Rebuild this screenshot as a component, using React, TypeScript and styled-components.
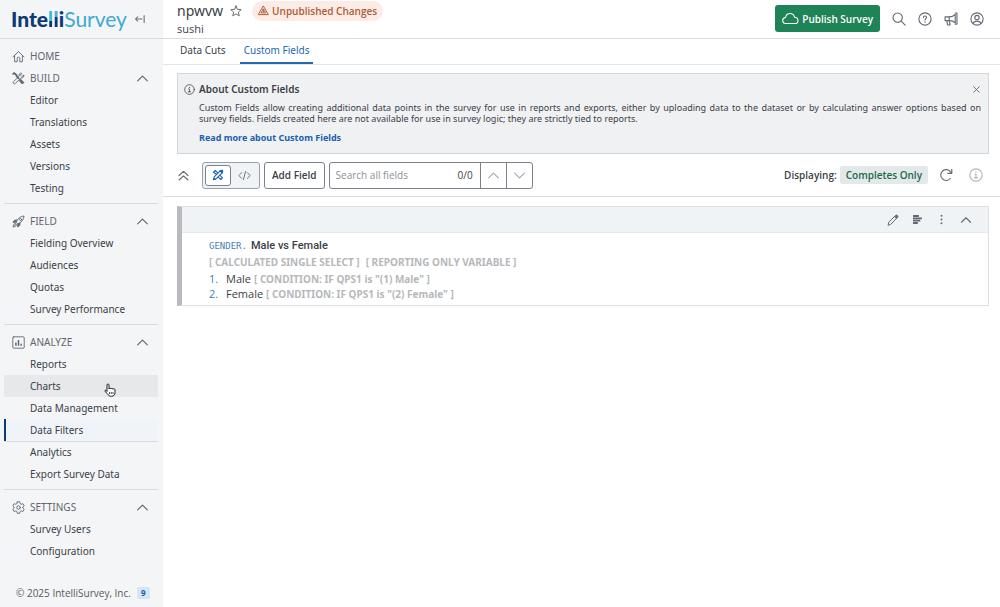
import React, { useState } from 'react';
import styled, { createGlobalStyle } from 'styled-components';

const GlobalStyle = createGlobalStyle`
  *, *::before, *::after { box-sizing: border-box; }
  body {
    margin: 0;
    background: #fff;
    color: #3a3f47;
    font-family: "Open Sans", "Noto Sans", sans-serif;
    font-size: 11px;
    line-height: 16px;
  }
  button, input { font: inherit; color: inherit; }
  a { color: inherit; text-decoration: none; }
  svg { display: block; flex: none; }
`;

/* ---------- icons ---------- */

const Svg = styled.svg.attrs({
  viewBox: '0 0 16 16',
  fill: 'none',
  stroke: 'currentColor',
  strokeLinecap: 'round',
  strokeLinejoin: 'round',
  'aria-hidden': true,
})<{ $size?: number; $weight?: number }>`
  width: ${(p) => p.$size ?? 14}px;
  height: ${(p) => p.$size ?? 14}px;
  stroke-width: ${(p) => p.$weight ?? 1.1};
`;

type IconProps = { size?: number; weight?: number };

const icon = (body: React.ReactNode) => ({ size, weight }: IconProps) => (
  <Svg $size={size} $weight={weight}>{body}</Svg>
);

const HomeIcon = icon(<><path d="M1.200 8.500 8 2l6.800 6.500" /><path d="M3.200 7V14.500h3.200V10.500a1.600 1.600 0 0 1 3.200 0v4h3.200V7" /></>);
const ToolsIcon = icon(
  <>
    <path d="M1.500 2.300 2.800 1.300 5.800 4.200 5.600 5.200 8 7.600" strokeWidth="2.200" />
    <path d="m9.500 9.300 1.200-.3 3.900 3.900-1.900 1.900L9 10.900Z" fill="currentColor" />
    <path d="M14.500 4.200 12.200 5.500 10.500 3.800 11.800 1.500C9.500 1 8.200 3 8.800 5.200L1.800 12a1.500 1.500 0 0 0 2.200 2.200l7-7c2.200.6 4-1 3.500-3Z" />
  </>,
);
const RocketIcon = icon(
  <>
    <path d="M5.300 8.500C7 4.500 10 1.500 14.800 1.200c-.2 4.800-3.200 7.800-7.300 9.500Z" />
    <circle cx="10.500" cy="5.500" r="1.300" />
    <path d="M6 6 3 6.500 1.200 9.200l3.900-.6M10 9.800 9.500 13 6.800 14.800l.6-3.900" fill="currentColor" />
    <path d="M4.300 10.500c-1.700 0-2.900 1.700-3 4.200 2.300 0 4.200-1 4.200-2.900Z" fill="currentColor" fillOpacity=".4" />
  </>,
);
const ChartIcon = icon(<><rect x="1" y="1" width="14" height="14" rx="1" /><path d="M4.800 8v4M8 5V12M11.200 9.500V12" strokeWidth="1.800" strokeLinecap="butt" /></>);
const GearIcon = icon(
  <>
    <path d="M6.500 1h3l.5 2.200 1.400.8 2.100-.7 1.500 2.600-1.600 1.500v1.400l1.600 1.500-1.500 2.600-2.100-.7-1.400.8-.5 2.200h-3l-.5-2.200-1.400-.8-2.100.7L1 10.300l1.600-1.500V7.400L1 5.900l1.500-2.600 2.100.7L6 3.200Z" />
    <circle cx="8" cy="8.100" r="2.200" />
  </>,
);
const UpIcon = icon(<path d="m2 11 6-6 6 6" />);
const DownIcon = icon(<path d="m2 5 6 6 6-6" />);
const CollapseIcon = icon(<path d="M10.500 8H2m3-3L2 8l3 3M13.500 3.500v9" />);
const StarIcon = icon(<path d="m8 1.200 1.900 4.500 5 .5-3.700 3.300 1.100 4.900L8 11.900l-4.300 2.500 1.100-4.900L1.100 6.200l5-.5Z" />);
const WarnIcon = icon(
  <>
    <path d="M8 1.800 15 14H1Z" />
    <path d="M8 6 11 11.500H5Z" />
    <path d="M8 8.300v1.500" />
  </>,
);
const SearchIcon = icon(<><circle cx="6.500" cy="6.500" r="5.300" /><path d="m10.500 10.500 4.500 4.500" /></>);
const HelpIcon = icon(
  <>
    <circle cx="8" cy="8" r="7" />
    <path d="M6.200 6.400c0-1.100.8-1.800 1.800-1.800s1.800.7 1.800 1.700c0 1.300-1.800 1.400-1.800 2.700" />
    <path d="M8 11.300v.2" strokeWidth="1.500" />
  </>,
);
const HornIcon = icon(
  <>
    <path d="M1.200 5.500h5.200c2.600 0 4.800-1.200 6.400-2.900v9.800C11.200 10.700 9 9.800 6.400 9.800H1.200Z" />
    <path d="M12.800 1.200h2v12.600h-2M6 5.500v4.300M3.200 9.800l.8 5h3L6 9.800" />
  </>,
);
const UserIcon = icon(<><circle cx="8" cy="8" r="7" /><circle cx="8" cy="6.300" r="2.500" /><path d="M3.800 13c.4-1.800 1.600-2.500 4.200-2.500s3.800.7 4.200 2.500" /></>);
const InfoIcon = icon(<><circle cx="8" cy="8" r="7" /><path d="M6.700 7.200H8v4M6.300 11.300h3.400" /><path d="M7.900 4.700v.2" strokeWidth="1.500" /></>);
const CloseIcon = icon(<path d="m3 3 10 10M13 3 3 13" />);
const DoubleUpIcon = icon(<path d="m2.500 8 5.500-5 5.500 5M2.500 13.500l5.500-5 5.500 5" />);
const DesignIcon = icon(
  <>
    <path d="M5.800 7 2 4.300 4.300 2 7.600 5.200M10.800 8.400l3.200 3.300-2.300 2.300-3.300-3.200" />
    <path d="m2 14 .9-3.400 8-8 2.500 2.500-8 8Z" />
    <path d="m11.200 2.500 2.600-.4-.3 2.600M2.200 13.800l1.800-.3" strokeWidth="2.400" />
  </>,
);
const CodeIcon = icon(<path d="M4.500 4.500 1 8l3.500 3.500M11.500 4.500 15 8l-3.500 3.500M9.300 3 6.700 13" />);
const RefreshIcon = icon(<><path d="M13 12a6.200 6.200 0 1 1 .2-7.600l.8 1.200" /><path d="M14.600 1.500v4.600H10" /></>);
const PencilIcon = icon(
  <>
    <path d="m1.500 14.500 1-3.800 7.700-7.500 2.600 2.600-7.500 7.700Z" />
    <path d="m10.300 3.100 1-1a1.800 1.800 0 0 1 2.700 2.700l-1 1Z" fill="currentColor" />
  </>,
);
const BarsIcon = icon(<path d="M1.500 2.900h8.500M1.500 6.300h13M1.500 9.700h10.500M1.500 13.100h7" strokeWidth="2.600" strokeLinecap="butt" />);
const DotsIcon = icon(<path d="M8 2.500v.1M8 8v.1M8 13.500v.1" strokeWidth="2.800" />);

/* ---------- page frame ---------- */

const Page = styled.div`
  display: grid;
  grid-template-columns: 163px minmax(0, 1fr);
  min-height: 100vh;
`;

const Sidebar = styled.aside`
  display: flex;
  flex-direction: column;
  background: #f4f5f7;
`;

const Brand = styled.div`
  display: flex;
  align-items: center;
  gap: 7px;
  height: 39px;
  padding: 0 0 1px 11px;
  border-bottom: 1px solid #d9dbde;
`;

const Logo = styled.a`
  font: 21px/30px Lato, sans-serif;
  color: #3fa9cf;
`;

const LogoStrong = styled.b`
  font-weight: 900;
  color: #0c3a73;
`;

const LogoSplit = styled.span<{ $stop: number }>`
  background: linear-gradient(#49b4d6 ${(p) => p.$stop}%, #0c3a73 ${(p) => p.$stop}%);
  background-clip: text;
  color: transparent;
`;

const IconButton = styled.button<{ $color?: string }>`
  display: inline-flex;
  align-items: center;
  justify-content: center;
  padding: 0;
  border: 0;
  background: none;
  color: ${(p) => p.$color ?? '#646a74'};
  cursor: pointer;
`;

const Nav = styled.nav`
  padding: 6px 5px 0 4px;
  font-family: "Noto Sans", sans-serif;
  font-size: 10px;
`;

const Section = styled.section`
  & + & {
    margin-top: 4px;
    padding-top: 6px;
    border-top: 1px solid #d9dbde;
  }
`;

const SectionHead = styled.button`
  display: flex;
  align-items: center;
  width: 100%;
  height: 22px;
  padding: 0 9px 0 8px;
  border: 0;
  background: none;
  color: #60656e;
  gap: 5px;
  text-align: left;
  cursor: pointer;
`;

const SectionLabel = styled.span`
  flex: 1;
`;

const List = styled.ul`
  margin: 0;
  padding: 0;
  list-style: none;
`;

const NavLink = styled.a<{ $state?: 'hover' | 'current' }>`
  display: flex;
  align-items: center;
  position: relative;
  height: 22px;
  padding-left: 26px;
  background: ${(p) => (p.$state === 'hover' ? '#e6e8ea' : p.$state === 'current' ? '#f0f4f9' : 'none')};
  box-shadow: ${(p) => (p.$state === 'current' ? 'inset 2px 0 #0c3a73, 0 1px #d9dbde' : 'none')};
`;

const Pointer = styled.svg`
  position: absolute;
  left: 100px;
  top: 8px;
  width: 12px;
  height: 14px;
`;

const Legal = styled.footer`
  display: flex;
  align-items: center;
  gap: 6px;
  margin-top: auto;
  padding: 0 0 6px 16px;
  font-size: 10px;
  color: #555a62;
`;

const Count = styled.span`
  padding: 0 4px;
  border-radius: 2px;
  background: #d3e6f6;
  color: #1a5ba6;
  font-size: 8px;
  font-weight: 700;
  line-height: 12px;
`;

/* ---------- header ---------- */

const Main = styled.main`
  min-width: 0;
`;

const Header = styled.header`
  display: flex;
  justify-content: space-between;
  align-items: center;
  height: 39px;
  padding: 0 16px 1px 14px;
  border-bottom: 1px solid #d9dbde;
`;

const TitleRow = styled.div`
  display: flex;
  align-items: center;
  gap: 7px;
  height: 20px;
`;

const Title = styled.h1`
  margin: 0;
  font: 14px/20px "Noto Sans", sans-serif;
`;

const Subtitle = styled.div`
  font-size: 11px;
  line-height: 16px;
`;

const Status = styled.span`
  display: inline-flex;
  align-items: center;
  gap: 3px;
  height: 20px;
  margin-left: 3px;
  padding: 0 6px;
  border-radius: 10px;
  background: #fcece5;
  color: #ae5a38;
  font-size: 10px;
  font-weight: 600;
`;

const Actions = styled.div`
  display: flex;
  align-items: center;
  gap: 12px;
`;

const Publish = styled.button`
  display: inline-flex;
  align-items: center;
  gap: 3px;
  height: 27px;
  padding: 0 7px;
  border: 0;
  border-radius: 3px;
  background: #1f8358;
  color: #fff;
  font-size: 10px;
  font-weight: 600;
  cursor: pointer;
`;

const Cloud = styled.svg`
  width: 17px;
  height: 13px;
`;

const Tabs = styled.nav`
  display: flex;
  gap: 10px;
  height: 26px;
  padding-left: 13px;
  border-bottom: 1px solid #e3e5e8;
`;

const Tab = styled.a<{ $active?: boolean }>`
  height: 25px;
  padding: 0 4px;
  font-family: "Noto Sans", sans-serif;
  font-size: 10px;
  line-height: 22px;
  color: ${(p) => (p.$active ? '#2468b2' : 'inherit')};
  border-bottom: 2px solid ${(p) => (p.$active ? '#2468b2' : 'transparent')};
`;

/* ---------- notice ---------- */

const Notice = styled.section`
  margin: 8px 11px 0 14px;
  padding: 7px 7px 7px 6px;
  border: 1px solid #d3d6d9;
  background: #f0f1f3;
`;

const NoticeHead = styled.div`
  display: flex;
  align-items: center;
  gap: 4px;
`;

const NoticeTitle = styled.h2`
  flex: 1;
  margin: 0;
  font: 600 10px/16px "Noto Sans", sans-serif;
`;

const NoticeBody = styled.div`
  padding: 5px 0 0 15px;
  font-family: "Noto Sans", sans-serif;
  font-size: 9px;
  line-height: 11px;
`;

const NoticeText = styled.p`
  margin: 0 0 6px;
  text-align: justify;
`;

const MoreLink = styled.a`
  color: #1c5fae;
  font-weight: 700;
  line-height: 16px;
`;

/* ---------- toolbar ---------- */

const Toolbar = styled.div`
  display: flex;
  align-items: center;
  gap: 4px;
  height: 43px;
  padding: 0 17px 0 14px;
  border-bottom: 1px solid #d9dbde;
`;

const Modes = styled.div`
  display: flex;
  height: 27px;
  margin-left: 8px;
  padding: 2px;
  border: 1px solid #9a9fa8;
  border-radius: 3px;
  background: #f0f3f6;
`;

const Mode = styled.button<{ $active?: boolean }>`
  display: inline-flex;
  align-items: center;
  justify-content: center;
  width: 26px;
  padding: 0;
  border: 1px solid ${(p) => (p.$active ? '#7b818c' : 'transparent')};
  border-radius: 3px;
  background: ${(p) => (p.$active ? '#fff' : 'none')};
  color: ${(p) => (p.$active ? '#1f64b3' : '#6b717b')};
  cursor: pointer;
`;

const AddButton = styled.button`
  height: 27px;
  padding: 0 7px;
  border: 1px solid #7b818c;
  border-radius: 3px;
  background: #fff;
  font-size: 10px;
  font-weight: 600;
  cursor: pointer;
`;

const Search = styled.label`
  display: flex;
  align-items: center;
  height: 27px;
  border: 1px solid #7b818c;
  border-radius: 3px;
  font-size: 10px;
`;

const SearchInput = styled.input`
  width: 128px;
  padding: 0 0 0 6px;
  border: 0;
  outline: 0;
  background: none;
  &::placeholder { color: #8b9098; opacity: 1; }
`;

const Hits = styled.span`
  padding-right: 7px;
`;

const Step = styled.button`
  display: inline-flex;
  align-items: center;
  justify-content: center;
  align-self: stretch;
  width: 26px;
  padding: 0;
  border: 0;
  border-left: 1px solid #7b818c;
  background: none;
  color: #a2a6ad;
  cursor: pointer;
`;

const Display = styled.div`
  display: flex;
  align-items: center;
  gap: 3px;
  margin-left: auto;
  font-size: 10px;
  font-weight: 600;
`;

const Filter = styled.span`
  padding: 0 6px;
  border-radius: 2px;
  background: #e5e8ea;
  color: #176b48;
  line-height: 18px;
`;

const ToolbarEnd = styled.div`
  display: flex;
  gap: 16px;
  margin-left: 7px;
`;

/* ---------- field card ---------- */

const Card = styled.article`
  margin: 9px 11px 0 14px;
  border: 1px solid #dfe1e4;
  border-left: 5px solid #b9babd;
`;

const CardTools = styled.div`
  display: flex;
  justify-content: flex-end;
  align-items: center;
  gap: 13px;
  height: 26px;
  padding-right: 16px;
  background: #eff3f6;
  border-bottom: 1px solid #e6e9ec;
`;

const CardBody = styled.div`
  padding: 5px 27px 4px;
`;

const FieldTitle = styled.h3`
  margin: 0;
  font: 500 11px/16px Roboto, sans-serif;
`;

const FieldName = styled.span`
  margin-right: 4px;
  color: #4a7fb5;
  font: 9px/16px "DejaVu Sans Mono", monospace;
`;

const Meta = styled.span`
  margin-right: 6px;
  color: #b6b8bb;
  font: 700 10px/16px "Noto Sans", sans-serif;
`;

const MetaRow = styled.div`
  line-height: 16px;
  height: 16px;
`;

const Options = styled.ol`
  margin: 1px 0 0;
  padding: 0;
  list-style: none;
  counter-reset: option;
`;

const Option = styled.li`
  display: flex;
  align-items: center;
  gap: 3px;
  height: 15px;
  counter-increment: option;
  &::before {
    content: counter(option) '.';
    width: 14px;
    color: #4a7fb5;
  }
`;

/* ---------- content ---------- */

const sections = [
  { name: 'BUILD', Icon: ToolsIcon, items: ['Editor', 'Translations', 'Assets', 'Versions', 'Testing'] },
  { name: 'FIELD', Icon: RocketIcon, items: ['Fielding Overview', 'Audiences', 'Quotas', 'Survey Performance'] },
  { name: 'ANALYZE', Icon: ChartIcon, items: ['Reports', 'Charts', 'Data Management', 'Data Filters', 'Analytics', 'Export Survey Data'] },
  { name: 'SETTINGS', Icon: GearIcon, items: ['Survey Users', 'Configuration'] },
];

const stateOf = (item: string) =>
  item === 'Charts' ? 'hover' : item === 'Data Filters' ? 'current' : undefined;

export default function App() {
  const [query, setQuery] = useState('');
  return (
    <>
      <GlobalStyle />
      <Page>
        <Sidebar>
          <Brand>
            <Logo href="#">
              <LogoStrong>Inte<LogoSplit $stop={62}>l</LogoSplit><LogoSplit $stop={45}>l</LogoSplit>i</LogoStrong>Survey
            </Logo>
            <IconButton aria-label="Collapse sidebar"><CollapseIcon size={12} weight={1.4} /></IconButton>
          </Brand>
          <Nav aria-label="Survey">
            <SectionHead><HomeIcon size={13} /><SectionLabel>HOME</SectionLabel></SectionHead>
            {sections.map(({ name, Icon, items }) => (
              <Section key={name}>
                <SectionHead>
                  <Icon size={13} />
                  <SectionLabel>{name}</SectionLabel>
                  <UpIcon size={13} weight={1.4} />
                </SectionHead>
                <List>
                  {items.map((item) => (
                    <li key={item}>
                      <NavLink href="#" $state={stateOf(item)}>
                        {item}
                        {item === 'Charts' && (
                          <Pointer viewBox="0 0 12 14" fill="#fff" stroke="#222" strokeLinejoin="round" aria-hidden>
                            <path d="M3 8.500V2a1 1 0 0 1 2 0v4c0-1 2-1 2 0 0-.9 2-.9 2 .3 0-.8 2-.7 2 .5v3c0 2-1.500 3.500-3.500 3.500-2.200 0-3-.8-4-2.500L1 8.500c-.6-1 .5-1.800 1.300-1Z" />
                            <path d="M5.500 9v2M7.300 9v2M9 9v2" strokeWidth=".8" />
                          </Pointer>
                        )}
                      </NavLink>
                    </li>
                  ))}
                </List>
              </Section>
            ))}
          </Nav>
          <Legal>© 2025 IntelliSurvey, Inc. <Count>9</Count></Legal>
        </Sidebar>

        <Main>
          <Header>
            <div>
              <TitleRow>
                <Title>npwvw</Title>
                <IconButton aria-label="Favorite"><StarIcon size={12} weight={1.3} /></IconButton>
                <Status><WarnIcon size={11} weight={1.4} />Unpublished Changes</Status>
              </TitleRow>
              <Subtitle>sushi</Subtitle>
            </div>
            <Actions>
              <Publish>
                <Cloud viewBox="0 0 17 13" fill="none" stroke="currentColor" strokeWidth="1.1" aria-hidden>
                  <path d="M4 11.500a3 3 0 0 1-.5-6C4 3 5.700 1.500 8 1.500c2.500 0 4 1.600 4.500 3.700 2 .1 3.500 1.400 3.500 3.200s-1.400 3.100-3.200 3.100Z" />
                </Cloud>
                Publish Survey
              </Publish>
              <IconButton aria-label="Search"><SearchIcon weight={1.3} /></IconButton>
              <IconButton aria-label="Help"><HelpIcon weight={1.3} /></IconButton>
              <IconButton aria-label="Announcements"><HornIcon weight={1.3} /></IconButton>
              <IconButton aria-label="Account"><UserIcon weight={1.3} /></IconButton>
            </Actions>
          </Header>
          <Tabs aria-label="Views">
            <Tab href="#">Data Cuts</Tab>
            <Tab href="#" $active aria-current="page">Custom Fields</Tab>
          </Tabs>

          <Notice>
            <NoticeHead>
              <InfoIcon size={11} />
              <NoticeTitle>About Custom Fields</NoticeTitle>
              <IconButton aria-label="Dismiss"><CloseIcon size={9} weight={1.6} /></IconButton>
            </NoticeHead>
            <NoticeBody>
              <NoticeText>
                Custom Fields allow creating additional data points in the survey for use in reports and exports, either by
                uploading data to the dataset or by calculating answer options based on survey&nbsp;fields. Fields created here
                are not available for use in survey logic; they are strictly tied to reports.
              </NoticeText>
              <MoreLink href="#">Read more about Custom Fields</MoreLink>
            </NoticeBody>
          </Notice>

          <Toolbar>
            <IconButton aria-label="Collapse all"><DoubleUpIcon size={13} weight={1.4} /></IconButton>
            <Modes>
              <Mode $active aria-label="Design view"><DesignIcon size={12} weight={1.5} /></Mode>
              <Mode aria-label="Code view"><CodeIcon size={13} weight={1.2} /></Mode>
            </Modes>
            <AddButton>Add Field</AddButton>
            <Search>
              <SearchInput
                aria-label="Search all fields"
                placeholder="Search all fields"
                value={query}
                onChange={(e) => setQuery(e.target.value)}
              />
              <Hits>0/0</Hits>
              <Step aria-label="Previous match"><UpIcon size={13} weight={1.3} /></Step>
              <Step aria-label="Next match"><DownIcon size={13} weight={1.3} /></Step>
            </Search>
            <Display>Displaying: <Filter>Completes Only</Filter></Display>
            <ToolbarEnd>
              <IconButton aria-label="Refresh"><RefreshIcon weight={1.3} /></IconButton>
              <IconButton aria-label="About filters" $color="#b0b3b8"><InfoIcon weight={1.3} /></IconButton>
            </ToolbarEnd>
          </Toolbar>

          <Card>
            <CardTools>
              <IconButton aria-label="Edit"><PencilIcon size={12} weight={1.3} /></IconButton>
              <IconButton aria-label="Summary"><BarsIcon size={11} /></IconButton>
              <IconButton aria-label="More"><DotsIcon size={11} /></IconButton>
              <IconButton aria-label="Collapse"><UpIcon size={12} weight={1.5} /></IconButton>
            </CardTools>
            <CardBody>
              <FieldTitle><FieldName>GENDER.</FieldName>Male vs Female</FieldTitle>
              <MetaRow>
                <Meta>[ CALCULATED SINGLE SELECT ]</Meta>
                <Meta>[ REPORTING ONLY VARIABLE ]</Meta>
              </MetaRow>
              <Options>
                <Option>Male <Meta>[ CONDITION: IF QPS1 is "(1) Male" ]</Meta></Option>
                <Option>Female <Meta>[ CONDITION: IF QPS1 is "(2) Female" ]</Meta></Option>
              </Options>
            </CardBody>
          </Card>
        </Main>
      </Page>
    </>
  );
}
